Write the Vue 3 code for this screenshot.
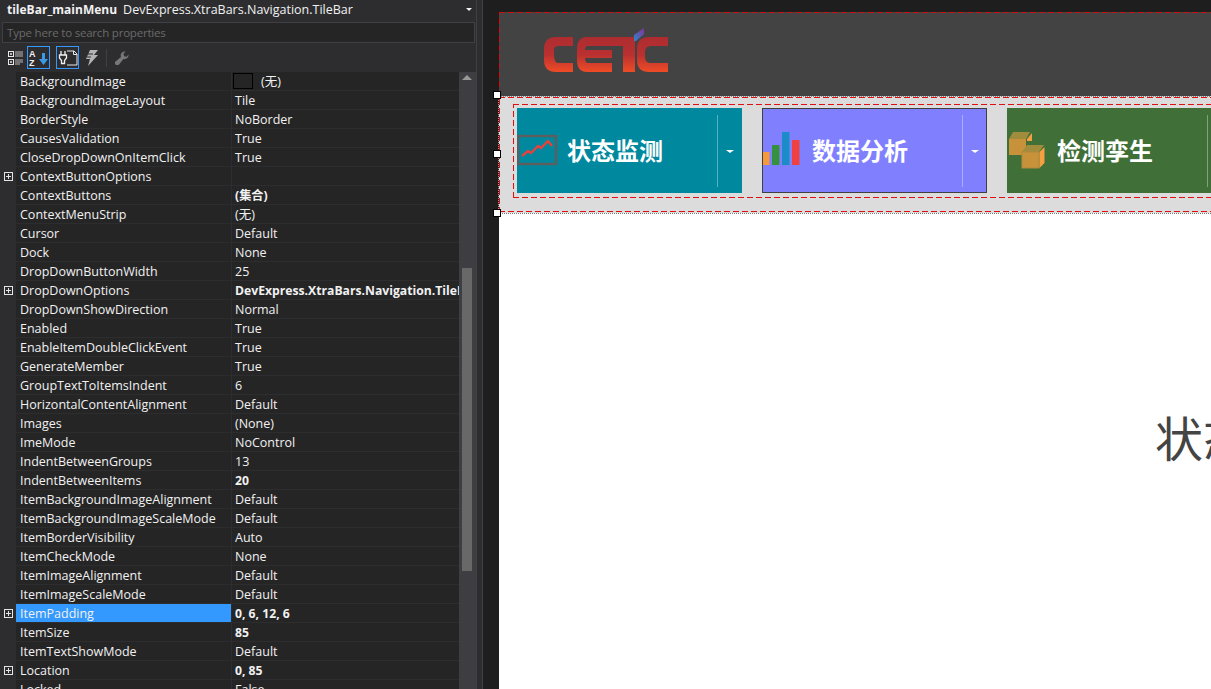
<script setup>
const rows = [
  { name: 'BackgroundImage', value: '(无)', swatch: true },
  { name: 'BackgroundImageLayout', value: 'Tile' },
  { name: 'BorderStyle', value: 'NoBorder' },
  { name: 'CausesValidation', value: 'True' },
  { name: 'CloseDropDownOnItemClick', value: 'True' },
  { name: 'ContextButtonOptions', value: '', expand: true },
  { name: 'ContextButtons', value: '(集合)', bold: true },
  { name: 'ContextMenuStrip', value: '(无)' },
  { name: 'Cursor', value: 'Default' },
  { name: 'Dock', value: 'None' },
  { name: 'DropDownButtonWidth', value: '25' },
  { name: 'DropDownOptions', value: 'DevExpress.XtraBars.Navigation.TileBarDropDownOptions', bold: true, expand: true },
  { name: 'DropDownShowDirection', value: 'Normal' },
  { name: 'Enabled', value: 'True' },
  { name: 'EnableItemDoubleClickEvent', value: 'True' },
  { name: 'GenerateMember', value: 'True' },
  { name: 'GroupTextToItemsIndent', value: '6' },
  { name: 'HorizontalContentAlignment', value: 'Default' },
  { name: 'Images', value: '(None)' },
  { name: 'ImeMode', value: 'NoControl' },
  { name: 'IndentBetweenGroups', value: '13' },
  { name: 'IndentBetweenItems', value: '20', bold: true },
  { name: 'ItemBackgroundImageAlignment', value: 'Default' },
  { name: 'ItemBackgroundImageScaleMode', value: 'Default' },
  { name: 'ItemBorderVisibility', value: 'Auto' },
  { name: 'ItemCheckMode', value: 'None' },
  { name: 'ItemImageAlignment', value: 'Default' },
  { name: 'ItemImageScaleMode', value: 'Default' },
  { name: 'ItemPadding', value: '0, 6, 12, 6', bold: true, expand: true, selected: true },
  { name: 'ItemSize', value: '85', bold: true },
  { name: 'ItemTextShowMode', value: 'Default' },
  { name: 'Location', value: '0, 85', bold: true, expand: true },
  { name: 'Locked', value: 'False' },
]
</script>

<template>
  <div class="app">
    <section class="props">
      <header class="title">
        <b>tileBar_mainMenu</b>
        <span>DevExpress.XtraBars.Navigation.TileBar</span>
        <i class="title-arrow"></i>
      </header>
      <div class="search">Type here to search properties</div>
      <div class="toolbar">
        <svg class="tool" width="15" height="16" viewBox="0 0 15 16">
          <g fill="none" stroke="#e8e8e8">
            <rect x="0.5" y="1.5" width="5" height="5" />
            <rect x="0.5" y="9.5" width="5" height="5" />
          </g>
          <path d="M2 4h2M3 3v2M2 12h2M3 11v2" stroke="#e8e8e8" />
          <path d="M7 2h8M7 4h8M7 6h8M7 10h8M7 12h8M7 14h5" stroke="#b8b8b8" />
        </svg>
        <div class="tool-btn">
          <svg width="20" height="18" viewBox="0 0 20 18">
            <text x="0" y="8" class="az">A</text>
            <text x="0" y="17" class="az">Z</text>
            <path d="M13 4h3v6h3l-4.500 6L10 10h3z" fill="#3b9ae1" />
          </svg>
        </div>
        <div class="tool-btn">
          <svg width="20" height="18" viewBox="0 0 20 18">
            <path d="M9 2h7l3 3v11H9" fill="none" stroke="#e8e8e8" />
            <path d="M15.500 2v3.500H19" fill="none" stroke="#e8e8e8" />
            <path d="M3 2v4M7 2v4M1.500 6h7v3l-2 2.500v3h-3v-3l-2-2.500z" fill="#2d2d30" stroke="#f0f0f0" stroke-width="1.300" />
          </svg>
        </div>
        <svg class="flash" width="14" height="16" viewBox="0 0 14 16">
          <path d="M5 0h8L9 5h4L3 16l2-7H1z" fill="#b4b4b4" />
          <path d="M3 4h5M2 7h4" stroke="#2d2d30" />
        </svg>
        <i class="tool-sep"></i>
        <svg class="wrench" width="14" height="14" viewBox="0 0 14 14">
          <path d="M13.500 3.500a4 4 0 0 1-5 4.500L4 13.500a2 2 0 0 1-3.500-3L6 6A4 4 0 0 1 10.500.5L8.500 2.800l.7 2.400 2.400.6z" fill="#77777a" />
        </svg>
      </div>
      <div class="grid-wrap">
        <div class="grid">
          <div v-for="row in rows" :key="row.name" class="row">
            <div class="gutter">
              <svg v-if="row.expand" width="9" height="9" viewBox="0 0 9 9">
                <rect x="0.5" y="0.500" width="8" height="8" fill="none" stroke="#e4e4e4" />
                <path d="M2 4.500h5M4.500 2v5" stroke="#e4e4e4" />
              </svg>
            </div>
            <div class="name" :class="{ selected: row.selected }">{{ row.name }}</div>
            <div class="value" :class="{ bold: row.bold }">
              <i v-if="row.swatch" class="swatch"></i>
              <span>{{ row.value }}</span>
            </div>
          </div>
        </div>
        <div class="scroll">
          <i class="scroll-up"></i>
          <i class="thumb"></i>
        </div>
      </div>
    </section>

    <div class="splitter"></div>

    <section class="designer">
      <div class="form-top">
        <svg class="logo" width="126" height="46" viewBox="0 0 126 46">
          <defs>
            <linearGradient id="logoRed" gradientUnits="userSpaceOnUse" x1="0" y1="9" x2="0" y2="44">
              <stop offset="0" stop-color="#ad2c30" />
              <stop offset="0.5" stop-color="#b93030" />
              <stop offset="1" stop-color="#ee4c26" />
            </linearGradient>
            <linearGradient id="logoLeaf" x1="0" y1="1" x2="1" y2="0">
              <stop offset="0" stop-color="#2b86c9" />
              <stop offset="1" stop-color="#8a2f9c" />
            </linearGradient>
          </defs>
          <g fill="url(#logoRed)">
            <path d="M12 9h17v9H14q-4 0-4 4v4q0 9 4 9h15v9H12Q0 44 0 32V21Q0 9 12 9z" />
            <path d="M39 9h25v9H40q-3 0-3 4h27v8H37q0 5 3 5h24v9H39q-10 0-10-12V21Q29 9 39 9z" transform="translate(4 0)" />
            <path d="M68 9h23v35H79V18H68z" />
            <path d="M105 9h19v9h-17q-6 0-6 6v5q0 6 6 6h17v9h-19q-12 0-12-12V21q0-12 12-12z" />
          </g>
          <path d="M90 7l10-7v6l-8 7h-2z" fill="url(#logoLeaf)" />
        </svg>
      </div>

      <div class="tilebar">
        <div class="tile-group">
          <div class="tile teal">
            <svg class="tile-icon" width="42" height="41" viewBox="0 0 42 41">
              <rect x="1" y="6" width="38" height="28" fill="none" stroke="#5e5e5e" stroke-width="2.400" />
              <path d="M5 26l6-5 3 2 7-7 3 2 7-7 4 5" fill="none" stroke="#e8413c" stroke-width="2.400" />
            </svg>
            <span class="tile-text">状态监测</span>
            <div class="tile-drop"><i></i></div>
          </div>
          <div class="tile violet">
            <svg class="tile-icon" width="42" height="41" viewBox="0 0 42 41">
              <rect x="0" y="22" width="6.500" height="13" fill="#f59a3c" />
              <rect x="9" y="15" width="7.500" height="20" fill="#36913f" />
              <rect x="19" y="2" width="7.500" height="33" fill="#1c8cc9" />
              <rect x="29" y="10" width="7.500" height="25" fill="#f04040" />
            </svg>
            <span class="tile-text">数据分析</span>
            <div class="tile-drop"><i></i></div>
          </div>
          <div class="tile green">
            <svg class="tile-icon" width="42" height="41" viewBox="0 0 42 41">
              <path d="M2 9l4-7h17l-4 7z" fill="#a08c3c" />
              <rect x="2" y="9" width="17" height="16" fill="#c8923a" />
              <path d="M20 9l5-6v8h-5z" fill="#f5a040" />
              <path d="M15 22l5-7h17l-5 7z" fill="#a08c3c" />
              <rect x="15" y="22" width="17" height="16" fill="#c8923a" stroke="#b08a3a" />
              <path d="M32.500 22l5-5v16l-5 5z" fill="#f5a040" />
            </svg>
            <span class="tile-text">检测孪生</span>
            <div class="tile-drop"><i></i></div>
          </div>
        </div>
      </div>

      <div class="form-body">
        <span class="big-text">状态监测</span>
      </div>

      <i class="handle h-top"></i>
      <i class="handle h-mid"></i>
      <i class="handle h-bot"></i>
    </section>
  </div>
</template>

<style scoped>
.app {
  display: flex;
  width: 1211px;
  height: 689px;
  overflow: hidden;
  background: #1e1e1e;
  font-family: "Open Sans", "Noto Sans CJK SC", sans-serif;
  font-size: 12.5px;
  color: #f1f1f1;
}

.props {
  width: 476px;
  flex-shrink: 0;
  display: flex;
  flex-direction: column;
  background: #2d2d30;
  overflow: hidden;
}

.title {
  position: relative;
  height: 22px;
  box-sizing: border-box;
  padding: 0 0 3px 7px;
  display: flex;
  align-items: center;
  gap: 6px;
  white-space: nowrap;
}

.title b {
  font-size: 12px;
  font-weight: 700;
}

.title-arrow {
  position: absolute;
  left: 466px;
  top: 8px;
  border: 3px solid transparent;
  border-top: 3px solid #f1f1f1;
  border-bottom: 0;
}

.search {
  height: 21px;
  line-height: 19px;
  box-sizing: border-box;
  margin: 0 1px 0 2px;
  padding-left: 4px;
  background: #252526;
  border: 1px solid #3f3f46;
  color: #6a6a6a;
  font-size: 11.5px;
  letter-spacing: -0.2px;
}

.toolbar {
  height: 29px;
  flex-shrink: 0;
  display: flex;
  align-items: center;
  padding-left: 8px;
}

.tool {
  margin-right: 4px;
}

.tool-btn {
  width: 23px;
  height: 23px;
  box-sizing: border-box;
  border: 1px solid #3399ff;
  display: flex;
  align-items: center;
  justify-content: center;
  margin-right: 6px;
}

.az {
  font-family: "Liberation Sans", sans-serif;
  font-size: 9px;
  font-weight: 700;
  fill: #f0f0f0;
}

.flash {
  margin-left: 0;
}

.tool-sep {
  width: 1px;
  height: 18px;
  margin: 0 8px 0 7px;
  background: #3f3f46;
}

.grid-wrap {
  flex: 1;
  display: flex;
  min-height: 0;
}

.grid {
  width: 459px;
  flex-shrink: 0;
  background: #252526;
}

.row {
  height: 19px;
  display: flex;
  box-sizing: border-box;
  border-bottom: 1px solid #2d2d30;
  line-height: 18px;
  white-space: nowrap;
}

.gutter {
  width: 16px;
  flex-shrink: 0;
  background: #2d2d30;
  display: flex;
  align-items: center;
  padding-left: 4px;
  box-sizing: border-box;
}

.name {
  width: 215px;
  flex-shrink: 0;
  padding: 1px 0 0 4px;
  box-sizing: border-box;
}

.name.selected {
  background: #3399ff;
}

.value {
  flex: 1;
  min-width: 0;
  overflow: hidden;
  border-left: 1px solid #2d2d30;
  padding: 2px 0 0 3px;
  box-sizing: border-box;
  display: flex;
  align-items: center;
}

.value.bold {
  font-size: 12.2px;
  font-weight: 700;
}

.swatch {
  width: 20px;
  height: 16px;
  flex-shrink: 0;
  box-sizing: border-box;
  border: 1px solid #000;
  margin: -2px 8px 0 -2px;
}

.scroll {
  position: relative;
  width: 17px;
  flex-shrink: 0;
  background: #3e3e42;
}

.scroll-up {
  position: absolute;
  left: 3px;
  top: 3px;
  border: 5px solid transparent;
  border-bottom: 5px solid #999;
  border-top: 0;
}

.thumb {
  position: absolute;
  left: 3px;
  top: 196px;
  width: 10px;
  height: 303px;
  background: #686868;
}

.splitter {
  width: 7px;
  flex-shrink: 0;
  box-sizing: border-box;
  background: #2d2d30;
  border-left: 1px solid #3f3f46;
  border-right: 1px solid #3f3f46;
}

.designer {
  position: relative;
  flex: 1;
  min-width: 0;
  margin-left: 16px;
  margin-top: 12px;
  display: flex;
  flex-direction: column;
}

.form-top {
  height: 84px;
  flex-shrink: 0;
  box-sizing: border-box;
  padding: 16px 0 0 45px;
  background:
    repeating-linear-gradient(90deg, #d01010 0 6px, transparent 6px 9px) top left / 100% 1px no-repeat,
    repeating-linear-gradient(0deg, #d01010 0 6px, transparent 6px 9px) top left / 1px 100% no-repeat,
    #434343;
}

.logo {
  display: block;
}

.tilebar {
  position: relative;
  height: 117px;
  flex-shrink: 0;
  box-sizing: border-box;
  padding: 8px 0 0 14px;
  background:
    repeating-linear-gradient(90deg, #888 0 1px, transparent 1px 2px) top left / 100% 1px no-repeat,
    repeating-linear-gradient(90deg, #e01010 0 6px, transparent 6px 9px) left 1px / 100% 1px no-repeat,
    repeating-linear-gradient(90deg, #e01010 0 6px, transparent 6px 9px) left 115px / 100% 1px no-repeat,
    repeating-linear-gradient(0deg, #e01010 0 6px, transparent 6px 9px) top left / 1px 100% no-repeat,
    #dcdcdc;
}

.tilebar::before {
  content: "";
  position: absolute;
  left: -1px;
  top: 0;
  bottom: 0;
  width: 1px;
  background: repeating-linear-gradient(0deg, #999 0 1px, transparent 1px 2px);
}

.tile-group {
  display: flex;
  gap: 20px;
  height: 94px;
  box-sizing: border-box;
  padding: 4px 0 0 4px;
  background:
    repeating-linear-gradient(90deg, #e01010 0 6px, transparent 6px 9px) top left / 100% 1px no-repeat,
    repeating-linear-gradient(90deg, #e01010 0 6px, transparent 6px 9px) bottom left / 100% 1px no-repeat,
    repeating-linear-gradient(0deg, #e01010 0 6px, transparent 6px 9px) top left / 1px 100% no-repeat;
}

.tile {
  position: relative;
  width: 225px;
  height: 85px;
  flex-shrink: 0;
  box-sizing: border-box;
  display: flex;
  align-items: center;
}

.teal {
  background: #00889e;
}

.violet {
  background: #8080ff;
  border: 1px solid #404040;
}

.green {
  background: #407038;
}

.tile-icon {
  width: 42px;
  flex-shrink: 0;
}

.tile-text {
  margin: -2px 0 0 8px;
  font-family: "Noto Sans CJK SC", sans-serif;
  font-size: 24px;
  font-weight: 700;
  line-height: 30px;
  color: #fff;
  white-space: nowrap;
}

.violet .tile-text {
  margin-left: 7px;
}

.tile-drop {
  position: absolute;
  right: 0;
  top: 7px;
  bottom: 6px;
  width: 25px;
  box-sizing: border-box;
  border-left: 1px solid rgba(255, 255, 255, 0.35);
  display: flex;
  align-items: center;
  justify-content: center;
}

.violet .tile-drop {
  top: 6px;
  bottom: 5px;
  right: -1px;
}

.tile-drop i {
  border: 4px solid transparent;
  border-top: 3px solid #fff;
  border-bottom: 0;
}

.form-body {
  flex: 1;
  box-sizing: border-box;
  padding: 192px 0 0 656px;
  background: #fff;
  white-space: nowrap;
  overflow: hidden;
  border-top: 1px dotted #777;
}

.big-text {
  font-family: "Noto Sans CJK SC", sans-serif;
  font-size: 48px;
  line-height: 60px;
  color: #444;
}

.handle {
  position: absolute;
  left: -6px;
  width: 8px;
  height: 8px;
  box-sizing: border-box;
  background: #fff;
  border: 1px solid #000;
}

.h-top {
  top: 79px;
}

.h-mid {
  top: 138px;
}

.h-bot {
  top: 197px;
}
</style>

<style>
html,
body {
  margin: 0;
  overflow: hidden;
  background: #1e1e1e;
}
</style>
